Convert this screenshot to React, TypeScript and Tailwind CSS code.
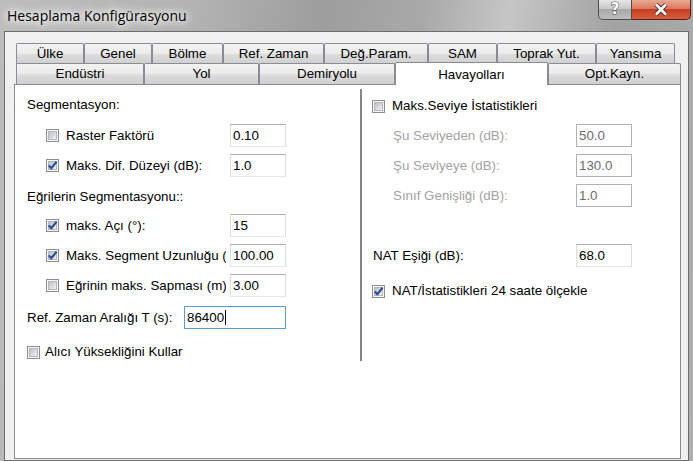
import type { ReactNode } from "react";

const UI_FONT = "font-['Liberation_Sans',Arial,sans-serif] text-[13.33px] text-black";

function CheckBox({ checked = false }: { checked?: boolean }) {
  return (
    <svg width="13" height="13" viewBox="0 0 13 13" className="shrink-0">
      <defs>
        <linearGradient id="cb-fill" x1="0" y1="0" x2="1" y2="1">
          <stop offset="0" stopColor="#b9bdc3" />
          <stop offset="1" stopColor="#f4f4f4" />
        </linearGradient>
      </defs>
      <rect x="0.5" y="0.5" width="12" height="12" fill="#f6f6f6" stroke="#8e8f8f" />
      <rect x="2.5" y="2.5" width="8" height="8" fill="url(#cb-fill)" stroke="#b4b8be" />
      {checked && (
        <path
          d="M2.8 6.4 L5.3 9.3 L10.6 2.6"
          fill="none"
          stroke="#2f4f9c"
          strokeWidth="2.2"
          strokeLinejoin="round"
        />
      )}
    </svg>
  );
}

type FieldProps = {
  value: string;
  className?: string;
  disabled?: boolean;
  focused?: boolean;
};

function Field({ value, className = "w-[56px]", disabled, focused }: FieldProps) {
  const look = focused
    ? "border-[#5b9bd5] text-black"
    : disabled
      ? "border-[#b0b3b6] text-[#6d6d6d]"
      : "border-t-[#abadb3] border-x-[#dbdde3] border-b-[#e3e6ec] text-black";
  return (
    <div
      className={`flex h-[23px] shrink-0 items-center border bg-white pl-[2px] ${look} ${className}`}>
      <span>{value}</span>
      {focused && <span className="ml-[1px] h-[15px] w-[1px] bg-black" />}
    </div>
  );
}

function CheckRow({
  label,
  checked,
  value,
}: {
  label: string;
  checked?: boolean;
  value: string;
}) {
  return (
    <div className="flex h-[23px] items-center pl-[19px]">
      <CheckBox checked={checked} />
      <span className="ml-[7px] w-[160px] overflow-hidden whitespace-nowrap">{label}</span>
      <span className="ml-[4px]">
        <Field value={value} />
      </span>
    </div>
  );
}

function Tab({ children, className }: { children: ReactNode; className: string }) {
  return (
    <div
      className={`flex h-[21px] shrink-0 items-center justify-center rounded-t-[2px] border border-b-0 border-[#898c95] bg-[linear-gradient(#f3f3f3,#ebebeb_50%,#dddddd_51%,#cfcfcf)] ${className}`}>
      {children}
    </div>
  );
}

export default function App() {
  return (
    <div className="flex h-[461px] w-[693px] flex-col overflow-hidden bg-[linear-gradient(100deg,#bdbdbd_0%,#b3b3b3_25%,#9d9d9d_42%,#a9a9a9_55%,#c6c6c6_66%,#a2a2a2_80%,#b0b0b0_100%)]">
      {/* title bar */}
      <div className="flex h-[31px] shrink-0 items-start justify-between">
        <div className="pl-[7px] pt-[5px] font-['Open_Sans',sans-serif] text-[14px] text-black [text-shadow:0_0_6px_#ffffff,0_0_10px_#ffffff,0_0_14px_#ffffff]">
          Hesaplama Konfigürasyonu
        </div>
        <div className="flex pr-[2px]">
          <div className="flex h-[20px] w-[34px] items-center justify-center rounded-bl-[5px] border border-t-0 border-[#4e4e4e] bg-[linear-gradient(#e6e6e6,#c9c9c9_45%,#a9a9a9_50%,#bdbdbd)] font-['DejaVu_Sans',sans-serif] text-[15px] leading-none font-bold text-white [-webkit-text-stroke:1px_#4a4a4a] [paint-order:stroke_fill]">
            ?
          </div>
          <div className="flex h-[20px] w-[59px] items-center justify-center rounded-br-[5px] border border-t-0 border-l-0 border-[#5b1d12] bg-[linear-gradient(#eaa894,#da7a60_45%,#c73d20_50%,#d5603f)]">
            <svg width="16" height="13" viewBox="0 0 16 13">
              <path d="M3 1.5 L13 11.5 M13 1.5 L3 11.5" stroke="#3d2a26" strokeWidth="4.4" />
              <path d="M3 1.5 L13 11.5 M13 1.5 L3 11.5" stroke="#ffffff" strokeWidth="2.6" />
            </svg>
          </div>
        </div>
      </div>

      {/* client area */}
      <div className={`mx-[4px] flex-1 border border-[#6d6d6d] bg-[#f0f0f0] pt-[11px] pr-[7px] pl-[9px] ${UI_FONT}`}>
        <div className="ml-[2px] flex">
          <Tab className="w-[68px]">Ülke</Tab>
          <Tab className="w-[68px]">Genel</Tab>
          <Tab className="w-[71px]">Bölme</Tab>
          <Tab className="w-[101px]">Ref. Zaman</Tab>
          <Tab className="w-[104px]">Değ.Param.</Tab>
          <Tab className="w-[69px]">SAM</Tab>
          <Tab className="w-[99px]">Toprak Yut.</Tab>
          <Tab className="w-[79px]">Yansıma</Tab>
        </div>
        <div className="ml-[2px] flex h-[20px] items-end">
          <Tab className="h-[20px] w-[128px]">Endüstri</Tab>
          <Tab className="h-[20px] w-[115px]">Yol</Tab>
          <Tab className="h-[20px] w-[136px]">Demiryolu</Tab>
          <div className="relative z-10 mb-[-1px] flex h-[23px] w-[153px] shrink-0 items-start justify-center rounded-t-[2px] border border-b-0 border-[#898c95] bg-white pt-[2px]">
            Havayolları
          </div>
          <Tab className="h-[20px] w-[133px]">Opt.Kayn.</Tab>
        </div>

        {/* page */}
        <div className="flex h-[375px] w-[667px] border border-[#898c95] bg-white">
          <div className="flex w-[345px] flex-col pt-[12px] pl-[12px]">
            <div className="h-[16px] leading-[16px]">Segmentasyon:</div>
            <div className="mt-[11px]">
              <CheckRow label="Raster Faktörü" value="0.10" />
            </div>
            <div className="mt-[7px]">
              <CheckRow label="Maks. Dif. Düzeyi (dB):" checked value="1.0" />
            </div>
            <div className="mt-[12px] h-[16px] leading-[16px]">Eğrilerin Segmentasyonu::</div>
            <div className="mt-[9px]">
              <CheckRow label="maks. Açı (°):" checked value="15" />
            </div>
            <div className="mt-[7px]">
              <CheckRow label="Maks. Segment Uzunluğu (m):" checked value="100.00" />
            </div>
            <div className="mt-[7px]">
              <CheckRow label="Eğrinin maks. Sapması (m):" value="3.00" />
            </div>
            <div className="mt-[9px] flex h-[23px] items-center">
              <span className="w-[157px]">Ref. Zaman Aralığı T (s):</span>
              <Field value="86400" focused className="w-[102px]" />
            </div>
            <div className="mt-[15px] flex h-[16px] items-center">
              <CheckBox />
              <span className="ml-[5px]">Alıcı Yüksekliğini Kullar</span>
            </div>
          </div>

          <div className="mt-[4px] h-[272px] w-[2px] shrink-0 bg-[#858585]" />

          <div className="flex flex-col pt-[13px] pl-[10px]">
            <div className="flex h-[16px] items-center">
              <CheckBox />
              <span className="ml-[7px]">Maks.Seviye İstatistikleri</span>
            </div>
            <div className="mt-[10px] flex h-[23px] items-center pl-[21px] text-[#a3a3a3]">
              <span className="w-[183px]">Şu Seviyeden (dB):</span>
              <Field value="50.0" disabled />
            </div>
            <div className="mt-[7px] flex h-[23px] items-center pl-[21px] text-[#a3a3a3]">
              <span className="w-[183px]">Şu Seviyeye (dB):</span>
              <Field value="130.0" disabled />
            </div>
            <div className="mt-[7px] flex h-[23px] items-center pl-[21px] text-[#a3a3a3]">
              <span className="w-[183px]">Sınıf Genişliği (dB):</span>
              <Field value="1.0" disabled />
            </div>
            <div className="mt-[37px] flex h-[23px] items-center pl-[1px]">
              <span className="w-[203px]">NAT Eşiği (dB):</span>
              <Field value="68.0" />
            </div>
            <div className="mt-[16px] flex h-[16px] items-center">
              <CheckBox checked />
              <span className="ml-[7px]">NAT/İstatistikleri 24 saate ölçekle</span>
            </div>
          </div>
        </div>
      </div>
    </div>
  );
}
